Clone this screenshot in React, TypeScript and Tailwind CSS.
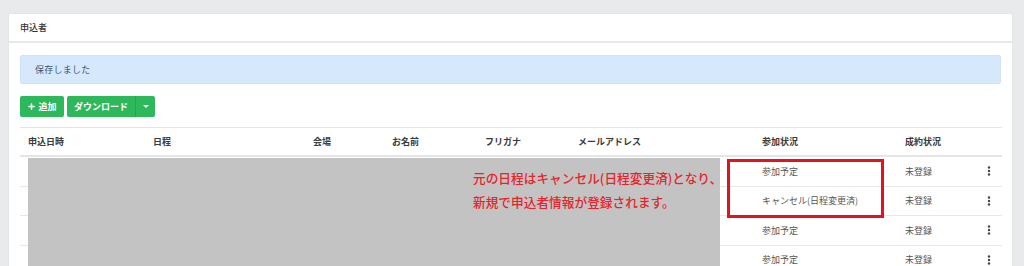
import { Plus } from "lucide-react";

const cols = [
  "申込日時",
  "日程",
  "会場",
  "お名前",
  "フリガナ",
  "メールアドレス",
  "参加状況",
  "成約状況",
  "",
];

const rows = [
  { status: "参加予定", deal: "未登録" },
  { status: "キャンセル(日程変更済)", deal: "未登録" },
  { status: "参加予定", deal: "未登録" },
  { status: "参加予定", deal: "未登録" },
];

const gridCols =
  "grid grid-cols-[125px_160px_79px_93px_93px_184px_143px_82px_1fr]";

const Kebab = () => (
  <svg width="4" height="10" viewBox="0 0 4 10" className="fill-[#444]">
    <circle cx="2" cy="1.5" r="1.2" />
    <circle cx="2" cy="5" r="1.2" />
    <circle cx="2" cy="8.5" r="1.2" />
  </svg>
);

export default function App() {
  return (
    <div
      className="h-[266px] overflow-hidden bg-[#e9eaec] pt-[13px] pl-2 pr-[11px]"
      style={{ fontFamily: '"Noto Sans CJK JP", "Noto Sans", sans-serif' }}
    >
      <div className="bg-white border border-[#e3e5e8] rounded-t-[2px] h-[300px]">
        {/* header */}
        <div className="h-[29px] flex items-center pl-[11px] pt-[1px] border-b-2 border-[#e6e8eb] text-[9px] text-[#333] font-medium">
          申込者
        </div>

        <div className="pt-[12px] pl-[11px] pr-[11px]">
          <div className="h-[29px] flex items-center pl-[14px] bg-[#d6e9fc] border border-[#cfe3f8] rounded-[2px] text-[9px] text-[#3d5675] tracking-wide">
            保存しました
          </div>

          {/* buttons */}
          <div className="flex gap-[3px] mt-[12px]">
            <button className="h-[21px] w-[44px] flex items-center justify-center gap-[2px] bg-[#2db85c] rounded-[2px] text-white text-[9px] font-bold">
              <Plus size={9} strokeWidth={4} />
              追加
            </button>
            <div className="h-[21px] flex bg-[#2db85c] rounded-[2px] text-white text-[9px] font-bold">
              <span className="w-[69px] flex items-center justify-center border-r border-[#25a34f]">
                ダウンロード
              </span>
              <span className="w-[19px] flex items-center justify-center">
                <span className="border-l-[3px] border-r-[3px] border-t-[3px] border-l-transparent border-r-transparent border-t-white" />
              </span>
            </div>
          </div>

          {/* table */}
          <div className="relative mt-[10px] w-[982px]">
            <div
              className={`${gridCols} h-[30px] items-center border-t border-b-2 border-[#e3e5e8] text-[9px] font-bold text-[#3b3b3b]`}
            >
              {cols.map((c, i) => (
                <div key={i} className="pl-2">
                  {c}
                </div>
              ))}
            </div>
            {rows.map((r, i) => (
              <div
                key={i}
                className={`${gridCols} h-[29.5px] items-center border-b border-[#e6e8eb] text-[9px] text-[#555]`}
              >
                <div className="pl-2" />
                <div className="pl-2" />
                <div className="pl-2" />
                <div className="pl-2" />
                <div className="pl-2" />
                <div className="pl-2" />
                <div className="pl-2">{r.status}</div>
                <div className="pl-2">{r.deal}</div>
                <div className="pl-2 flex">
                  <Kebab />
                </div>
              </div>
            ))}

            {/* masked area */}
            <div className="absolute left-[8px] top-[31px] w-[692px] h-[200px] bg-[#c3c3c3] pl-[445px] pt-[8px]">
              <p className="text-[12.7px] leading-[24px] font-medium text-[#e8232b] whitespace-nowrap">
                元の日程はキャンセル(日程変更済)となり、
                <br />
                新規で申込者情報が登録されます。
              </p>
            </div>

            {/* highlight box */}
            <div className="absolute left-[707px] top-[32px] w-[157px] h-[59px] border-[3px] border-[#e5111e]" />
          </div>
        </div>
      </div>
    </div>
  );
}
